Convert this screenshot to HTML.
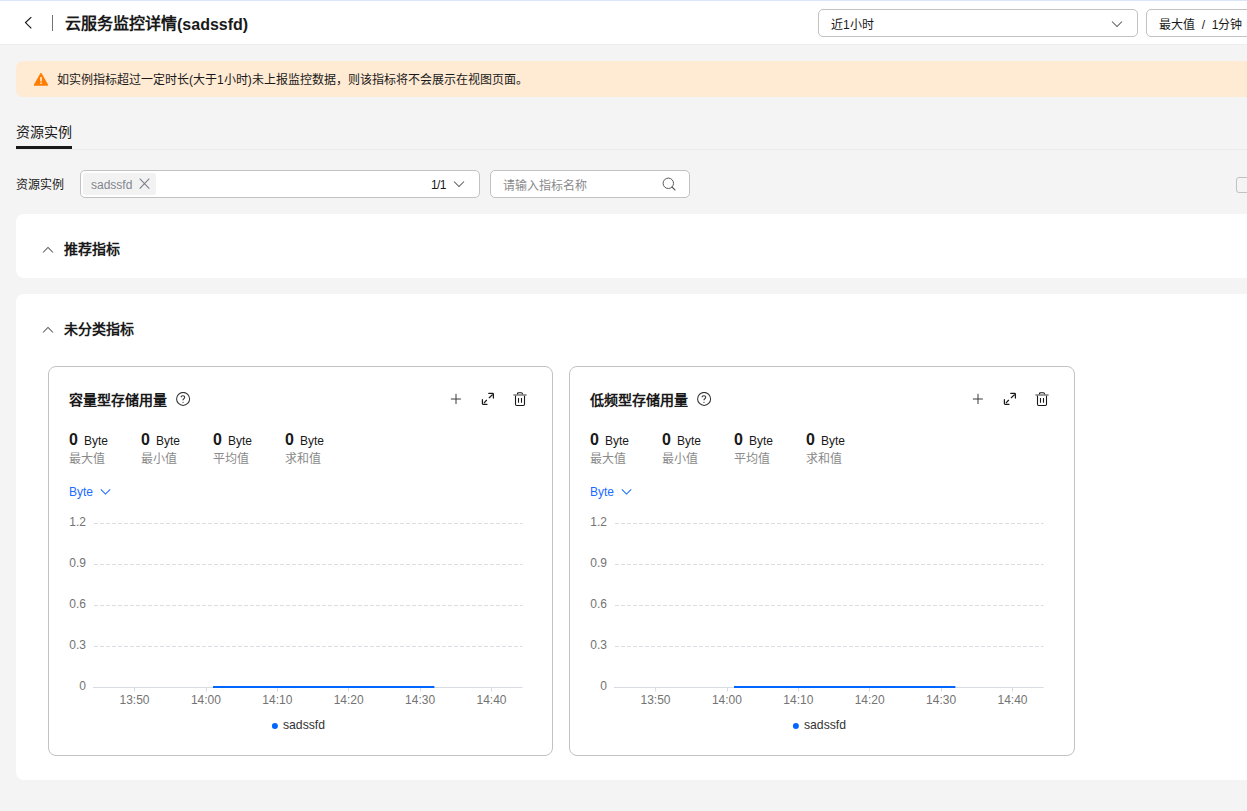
<!DOCTYPE html>
<html lang="zh-CN"><head><meta charset="utf-8">
<style>
*{margin:0;padding:0;box-sizing:border-box}
html,body{width:1247px;height:811px;overflow:hidden}
body{background:#f4f4f4;font-family:"Liberation Sans",sans-serif;color:#191919;position:relative}
.a{position:absolute}
.topline{left:0;top:0;width:1247px;height:1px;background:#dbe5fb}
.hdr{left:0;top:1px;width:1247px;height:43px;background:#fff}
.back{left:24px;top:16px;width:9px;height:14px}
.vdiv{left:52px;top:15px;width:1px;height:16px;background:#737373}
.title{left:65px;top:14px;font-size:16px;font-weight:bold;line-height:20px;white-space:nowrap}
.sel{border:1px solid #c2c2c2;border-radius:5px;background:#fff;height:28px;top:9px}
.sel span{position:absolute;left:12px;top:7px;font-size:12px;line-height:16px;white-space:nowrap}
.warn{left:16px;top:61px;width:1240px;height:36px;background:#ffead3;border-radius:7px}
.warn .t{position:absolute;left:41px;top:11px;font-size:12px;line-height:16px;white-space:nowrap;color:#191919}
.tab{left:16px;top:123px;font-size:14px;line-height:18px;white-space:nowrap}
.tabul{left:16px;top:146px;width:56px;height:3px;background:#191919}
.tabline{left:16px;top:149px;width:1240px;height:1px;background:#ebebeb}
.lbl{left:16px;top:177px;font-size:12px;line-height:16px;white-space:nowrap}
.inp{border:1px solid #c2c2c2;border-radius:5px;background:#fff;height:28px;top:170px}
.tag{left:2px;top:2px;width:73px;height:22px;background:#f2f2f2;border-radius:3px}
.tag span{position:absolute;left:8px;top:5px;font-size:12px;line-height:14px;color:#82868f}
.panel{background:#fff;border-radius:8px;left:16px;width:1240px}
.ptitle{font-size:14px;font-weight:bold;line-height:18px;white-space:nowrap;left:48px}
.card{border:1px solid #c2c2c2;border-radius:8px;background:#fff;top:72px;width:506px;height:390px}
.ctitle{left:20px;top:24px;font-size:14px;font-weight:bold;line-height:18px;white-space:nowrap}
.stat{top:63px}
.stat .v{position:absolute;left:0;top:0;font-size:16px;font-weight:bold;line-height:20px}
.stat .u{position:absolute;left:15px;top:3px;font-size:12px;line-height:16px;white-space:nowrap}
.stat .n{position:absolute;left:0;top:21px;font-size:12px;line-height:16px;color:#8a8a8a;white-space:nowrap}
.unit{left:20px;top:117px;font-size:12px;line-height:16px;color:#1a6cff;white-space:nowrap}
.yl{font-size:12px;line-height:14px;color:#737373;text-align:right;width:30px}
.xl{font-size:12px;line-height:14px;color:#737373;text-align:center;width:40px}
.legend{top:350px;font-size:12px;line-height:16px;color:#4d4d4d;white-space:nowrap}
</style></head>
<body>
<div class="a topline"></div>
<div class="a hdr"></div>
<div class="a" style="left:0;top:44px;width:1247px;height:1px;background:#ededed"></div>
<svg class="a back" viewBox="0 0 9 14"><path d="M7.3 1.1 L1.5 6.6 L7.3 12.4" fill="none" stroke="#111" stroke-width="1.15"/></svg>
<div class="a vdiv"></div>
<div class="a title">云服务监控详情<span style="position:relative;top:1px">(sadssfd)</span></div>

<div class="a sel" style="left:818px;width:320px"><span>近1小时</span>
<svg class="a" style="left:292px;top:10px" width="12" height="8" viewBox="0 0 12 8"><path d="M1 1.5 L6 6.5 L11 1.5" fill="none" stroke="#595959" stroke-width="1.05"/></svg></div>
<div class="a sel" style="left:1146px;width:200px"><span>最大值&nbsp;&nbsp;/&nbsp;&nbsp;1分钟</span></div>

<div class="a warn">
<svg class="a" style="left:17px;top:11px" width="16" height="15" viewBox="0 0 16 15"><path d="M8 1.9 L14.2 12.9 L1.8 12.9 Z" fill="#ff7d00" stroke="#ff7d00" stroke-width="1.8" stroke-linejoin="round"/><rect x="7.3" y="5" width="1.4" height="4.4" fill="#fff"/><rect x="7.3" y="10.5" width="1.4" height="1.4" fill="#fff"/></svg>
<div class="t">如实例指标超过一定时长(大于1小时)未上报监控数据，则该指标将不会展示在视图页面。</div>
</div>

<div class="a tab">资源实例</div>
<div class="a tabline"></div>
<div class="a tabul"></div>

<div class="a lbl">资源实例</div>
<div class="a inp" style="left:80px;width:400px">
 <div class="a tag"><span>sadssfd</span>
 <svg class="a" style="left:56px;top:5px" width="12" height="12" viewBox="0 0 12 12"><path d="M0.7 0.6 L10.3 10.6 M10.3 0.6 L0.7 10.6" stroke="#7a7f8a" stroke-width="1.1"/></svg></div>
 <div class="a" style="left:350px;top:6px;font-size:12px;line-height:16px;letter-spacing:-0.6px">1/1</div>
 <svg class="a" style="left:372px;top:9px" width="12" height="8" viewBox="0 0 12 8"><path d="M1 1.5 L6 6.5 L11 1.5" fill="none" stroke="#595959" stroke-width="1.05"/></svg>
</div>
<div class="a inp" style="left:490px;width:200px">
 <div class="a" style="left:12px;top:7px;font-size:12px;line-height:16px;color:#8a8a8a;white-space:nowrap">请输入指标名称</div>
 <svg class="a" style="left:171px;top:6px" width="15" height="15" viewBox="0 0 15 15"><circle cx="6.3" cy="6.3" r="5.2" fill="none" stroke="#595959" stroke-width="1"/><path d="M10 10 L13 13" stroke="#595959" stroke-width="1.1" stroke-linecap="round"/></svg>
</div>
<div class="a" style="left:1236px;top:177px;width:16px;height:16px;border:1px solid #c2c2c2;border-radius:3px;background:#f4f4f4"></div>

<div class="a panel" style="top:214px;height:64px">
 <svg class="a" style="left:26px;top:32px" width="12" height="8" viewBox="0 0 12 8"><path d="M1 6.5 L6 1.5 L11 6.5" fill="none" stroke="#595959" stroke-width="1.05"/></svg>
 <div class="a ptitle" style="top:26px">推荐指标</div>
</div>

<div class="a panel" style="top:294px;height:486px">
 <svg class="a" style="left:26px;top:32px" width="12" height="8" viewBox="0 0 12 8"><path d="M1 6.5 L6 1.5 L11 6.5" fill="none" stroke="#595959" stroke-width="1.05"/></svg>
 <div class="a ptitle" style="top:26px">未分类指标</div>
 <!--CARDS-->
<div class="a card" style="left:32px;width:505px">
<div class="a ctitle">容量型存储用量</div>
<svg class="a" style="left:127px;top:25px" width="15" height="15" viewBox="0 0 15 15"><circle cx="7.1" cy="6.9" r="6.5" fill="none" stroke="#333" stroke-width="1.05"/><path d="M5.1 5.3 Q5.1 3.7 6.9 3.7 Q8.7 3.7 8.7 5.2 Q8.7 6.1 7.8 6.7 Q7 7.2 7 8 V8.3" fill="none" stroke="#333" stroke-width="1.1"/><circle cx="7" cy="10.3" r="0.6" fill="#333"/></svg>
<svg class="a" style="left:401px;top:26px" width="12" height="12" viewBox="0 0 12 12"><path d="M6 0.8 V11 M0.9 6 H10.9" stroke="#3a3a3a" stroke-width="1"/></svg>
<svg class="a" style="left:432px;top:25px" width="14" height="14" viewBox="0 0 14 14"><path d="M7.8 1.4 H11.6 Q12.4 1.4 12.4 2.2 V6 M8.3 5.7 L11.2 2.9 M1.4 7.7 V11.5 Q1.4 12.3 2.2 12.3 H6 M3.3 10.6 L5.5 8.3" fill="none" stroke="#191919" stroke-width="1.25" stroke-linecap="round"/></svg>
<svg class="a" style="left:464px;top:24px" width="15" height="16" viewBox="0 0 15 16"><path d="M0.4 4 H13.6" stroke="#8a8a8a" stroke-width="1.7"/><path d="M4.5 3.2 V2.9 Q4.5 1.7 5.7 1.7 H8.3 Q9.5 1.7 9.5 2.9 V3.2" fill="none" stroke="#191919" stroke-width="1.1"/><path d="M2.5 4.8 V13.3 Q2.5 14.5 3.7 14.5 H10.3 Q11.5 14.5 11.5 13.3 V4.8" fill="none" stroke="#191919" stroke-width="1.1"/><path d="M5.5 7 V11.8 M8.5 7 V11.8" stroke="#191919" stroke-width="1.1"/></svg>
<div class="a stat" style="left:20px"><div class="v">0</div><div class="u">Byte</div><div class="n">最大值</div></div>
<div class="a stat" style="left:92px"><div class="v">0</div><div class="u">Byte</div><div class="n">最小值</div></div>
<div class="a stat" style="left:164px"><div class="v">0</div><div class="u">Byte</div><div class="n">平均值</div></div>
<div class="a stat" style="left:236px"><div class="v">0</div><div class="u">Byte</div><div class="n">求和值</div></div>
<div class="a unit">Byte</div>
<svg class="a" style="left:51px;top:121px" width="11" height="7" viewBox="0 0 11 7"><path d="M0.8 1.3 L5.5 6 L10.2 1.3" fill="none" stroke="#1a6cff" stroke-width="1.05"/></svg>
<svg class="a" style="left:-1px;top:-1px" width="505" height="390" viewBox="0 0 505 390"><path d="M46 157.5 H474.6" stroke="#dcdde3" stroke-width="1" stroke-dasharray="4 2"/><path d="M46 198.5 H474.6" stroke="#dcdde3" stroke-width="1" stroke-dasharray="4 2"/><path d="M46 239.5 H474.6" stroke="#dcdde3" stroke-width="1" stroke-dasharray="4 2"/><path d="M46 280.5 H474.6" stroke="#dcdde3" stroke-width="1" stroke-dasharray="4 2"/><path d="M45 321.5 H474.6" stroke="#d9dbe3" stroke-width="1"/><text x="38" y="160" text-anchor="end" font-size="12" font-family="Liberation Sans" fill="#737373">1.2</text><text x="38" y="201" text-anchor="end" font-size="12" font-family="Liberation Sans" fill="#737373">0.9</text><text x="38" y="242" text-anchor="end" font-size="12" font-family="Liberation Sans" fill="#737373">0.6</text><text x="38" y="283" text-anchor="end" font-size="12" font-family="Liberation Sans" fill="#737373">0.3</text><text x="38" y="324" text-anchor="end" font-size="12" font-family="Liberation Sans" fill="#737373">0</text><path d="M86.5 322 V325.5" stroke="#d9dbe3" stroke-width="1"/><text x="86.5" y="338" text-anchor="middle" font-size="12" font-family="Liberation Sans" fill="#737373">13:50</text><path d="M158.5 322 V325.5" stroke="#d9dbe3" stroke-width="1"/><text x="157.9" y="338" text-anchor="middle" font-size="12" font-family="Liberation Sans" fill="#737373">14:00</text><path d="M229.5 322 V325.5" stroke="#d9dbe3" stroke-width="1"/><text x="229.3" y="338" text-anchor="middle" font-size="12" font-family="Liberation Sans" fill="#737373">14:10</text><path d="M300.5 322 V325.5" stroke="#d9dbe3" stroke-width="1"/><text x="300.70000000000005" y="338" text-anchor="middle" font-size="12" font-family="Liberation Sans" fill="#737373">14:20</text><path d="M372.5 322 V325.5" stroke="#d9dbe3" stroke-width="1"/><text x="372.1" y="338" text-anchor="middle" font-size="12" font-family="Liberation Sans" fill="#737373">14:30</text><path d="M443.5 322 V325.5" stroke="#d9dbe3" stroke-width="1"/><text x="443.5" y="338" text-anchor="middle" font-size="12" font-family="Liberation Sans" fill="#737373">14:40</text><path d="M165 321 H386.4" stroke="#0066ff" stroke-width="2"/><circle cx="226.9" cy="359.9" r="3" fill="#0066ff"/><text x="235" y="363" font-size="12.2" font-family="Liberation Sans" fill="#333">sadssfd</text></svg>
</div>
<div class="a card" style="left:553px;width:506px">
<div class="a ctitle">低频型存储用量</div>
<svg class="a" style="left:127px;top:25px" width="15" height="15" viewBox="0 0 15 15"><circle cx="7.1" cy="6.9" r="6.5" fill="none" stroke="#333" stroke-width="1.05"/><path d="M5.1 5.3 Q5.1 3.7 6.9 3.7 Q8.7 3.7 8.7 5.2 Q8.7 6.1 7.8 6.7 Q7 7.2 7 8 V8.3" fill="none" stroke="#333" stroke-width="1.1"/><circle cx="7" cy="10.3" r="0.6" fill="#333"/></svg>
<svg class="a" style="left:402px;top:26px" width="12" height="12" viewBox="0 0 12 12"><path d="M6 0.8 V11 M0.9 6 H10.9" stroke="#3a3a3a" stroke-width="1"/></svg>
<svg class="a" style="left:433px;top:25px" width="14" height="14" viewBox="0 0 14 14"><path d="M7.8 1.4 H11.6 Q12.4 1.4 12.4 2.2 V6 M8.3 5.7 L11.2 2.9 M1.4 7.7 V11.5 Q1.4 12.3 2.2 12.3 H6 M3.3 10.6 L5.5 8.3" fill="none" stroke="#191919" stroke-width="1.25" stroke-linecap="round"/></svg>
<svg class="a" style="left:465px;top:24px" width="15" height="16" viewBox="0 0 15 16"><path d="M0.4 4 H13.6" stroke="#8a8a8a" stroke-width="1.7"/><path d="M4.5 3.2 V2.9 Q4.5 1.7 5.7 1.7 H8.3 Q9.5 1.7 9.5 2.9 V3.2" fill="none" stroke="#191919" stroke-width="1.1"/><path d="M2.5 4.8 V13.3 Q2.5 14.5 3.7 14.5 H10.3 Q11.5 14.5 11.5 13.3 V4.8" fill="none" stroke="#191919" stroke-width="1.1"/><path d="M5.5 7 V11.8 M8.5 7 V11.8" stroke="#191919" stroke-width="1.1"/></svg>
<div class="a stat" style="left:20px"><div class="v">0</div><div class="u">Byte</div><div class="n">最大值</div></div>
<div class="a stat" style="left:92px"><div class="v">0</div><div class="u">Byte</div><div class="n">最小值</div></div>
<div class="a stat" style="left:164px"><div class="v">0</div><div class="u">Byte</div><div class="n">平均值</div></div>
<div class="a stat" style="left:236px"><div class="v">0</div><div class="u">Byte</div><div class="n">求和值</div></div>
<div class="a unit">Byte</div>
<svg class="a" style="left:51px;top:121px" width="11" height="7" viewBox="0 0 11 7"><path d="M0.8 1.3 L5.5 6 L10.2 1.3" fill="none" stroke="#1a6cff" stroke-width="1.05"/></svg>
<svg class="a" style="left:-1px;top:-1px" width="506" height="390" viewBox="0 0 506 390"><path d="M46 157.5 H474.6" stroke="#dcdde3" stroke-width="1" stroke-dasharray="4 2"/><path d="M46 198.5 H474.6" stroke="#dcdde3" stroke-width="1" stroke-dasharray="4 2"/><path d="M46 239.5 H474.6" stroke="#dcdde3" stroke-width="1" stroke-dasharray="4 2"/><path d="M46 280.5 H474.6" stroke="#dcdde3" stroke-width="1" stroke-dasharray="4 2"/><path d="M45 321.5 H474.6" stroke="#d9dbe3" stroke-width="1"/><text x="38" y="160" text-anchor="end" font-size="12" font-family="Liberation Sans" fill="#737373">1.2</text><text x="38" y="201" text-anchor="end" font-size="12" font-family="Liberation Sans" fill="#737373">0.9</text><text x="38" y="242" text-anchor="end" font-size="12" font-family="Liberation Sans" fill="#737373">0.6</text><text x="38" y="283" text-anchor="end" font-size="12" font-family="Liberation Sans" fill="#737373">0.3</text><text x="38" y="324" text-anchor="end" font-size="12" font-family="Liberation Sans" fill="#737373">0</text><path d="M86.5 322 V325.5" stroke="#d9dbe3" stroke-width="1"/><text x="86.5" y="338" text-anchor="middle" font-size="12" font-family="Liberation Sans" fill="#737373">13:50</text><path d="M158.5 322 V325.5" stroke="#d9dbe3" stroke-width="1"/><text x="157.9" y="338" text-anchor="middle" font-size="12" font-family="Liberation Sans" fill="#737373">14:00</text><path d="M229.5 322 V325.5" stroke="#d9dbe3" stroke-width="1"/><text x="229.3" y="338" text-anchor="middle" font-size="12" font-family="Liberation Sans" fill="#737373">14:10</text><path d="M300.5 322 V325.5" stroke="#d9dbe3" stroke-width="1"/><text x="300.70000000000005" y="338" text-anchor="middle" font-size="12" font-family="Liberation Sans" fill="#737373">14:20</text><path d="M372.5 322 V325.5" stroke="#d9dbe3" stroke-width="1"/><text x="372.1" y="338" text-anchor="middle" font-size="12" font-family="Liberation Sans" fill="#737373">14:30</text><path d="M443.5 322 V325.5" stroke="#d9dbe3" stroke-width="1"/><text x="443.5" y="338" text-anchor="middle" font-size="12" font-family="Liberation Sans" fill="#737373">14:40</text><path d="M165 321 H386.4" stroke="#0066ff" stroke-width="2"/><circle cx="226.9" cy="359.9" r="3" fill="#0066ff"/><text x="235" y="363" font-size="12.2" font-family="Liberation Sans" fill="#333">sadssfd</text></svg>
</div>
<!--/CARDS-->
</div>
</body></html>
